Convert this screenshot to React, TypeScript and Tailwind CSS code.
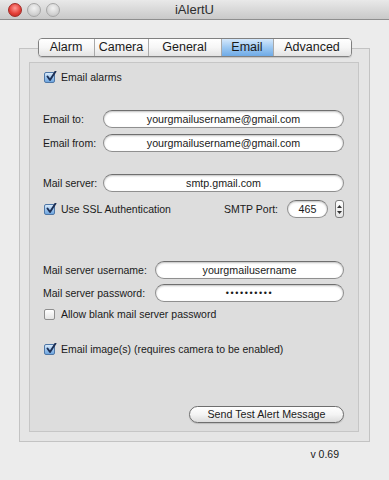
import React from "react";

const font = { fontFamily: '"Liberation Sans", Arial, sans-serif' };

function Check({ checked }: { checked: boolean }) {
  return (
    <div
      className={
        "relative w-[11px] h-[11px] rounded-[2px] border shrink-0 " +
        (checked
          ? "border-[#4f77a6] bg-gradient-to-b from-[#d9eafa] via-[#9fc6ee] to-[#6ea5de]"
          : "border-[#8e8e8e] bg-gradient-to-b from-[#ffffff] to-[#e4e4e4]")
      }
    >
      {checked && (
        <svg className="absolute left-[1px] top-[-2px]" width="11" height="11" viewBox="0 0 11 11">
          <path d="M1.5 5.5 L4 9 L9.5 0.5" fill="none" stroke="#1c2f55" strokeWidth="1.9" strokeLinecap="round" strokeLinejoin="round" />
        </svg>
      )}
    </div>
  );
}

function CheckRow({ checked, label, className = "" }: { checked: boolean; label: string; className?: string }) {
  return (
    <div className={"flex items-center h-[14px] pl-[1px] gap-[6px] " + className}>
      <Check checked={checked} />
      <span className="text-[10.5px] text-[#1a1a1a] leading-none">{label}</span>
    </div>
  );
}

function Field({ value, className = "", bullets = false }: { value: string; className?: string; bullets?: boolean }) {
  return (
    <div
      className={
        "h-[18px] rounded-full border border-[#8f8f8f] border-t-[#6f6f6f] bg-white shadow-[inset_0_1px_2px_rgba(0,0,0,0.25)] flex items-center justify-center " +
        className
      }
    >
      <span
        className={
          "leading-none text-[#1a1a1a] " + (bullets ? "text-[9px] tracking-[1.6px]" : "text-[10.7px]")
        }
      >
        {value}
      </span>
    </div>
  );
}

function LabeledField({ label, value, labelW, className = "", bullets = false }: { label: string; value: string; labelW: string; className?: string; bullets?: boolean }) {
  return (
    <div className={"flex items-center h-[18px] " + className}>
      <span className={"text-[10.5px] text-[#1a1a1a] leading-none shrink-0 " + labelW}>{label}</span>
      <Field value={value} className="flex-1" bullets={bullets} />
    </div>
  );
}

export default function App() {
  const tabs = [
    { t: "Alarm", w: "w-[55px]" },
    { t: "Camera", w: "w-[54px]" },
    { t: "General", w: "w-[73px]" },
    { t: "Email", w: "w-[52px]", sel: true },
    { t: "Advanced", w: "w-[78px]" },
  ];
  return (
    <div className="w-[389px] h-[480px] bg-[#ececec] flex flex-col overflow-hidden" style={font}>
      {/* title bar */}
      <div className="relative h-[20px] shrink-0 bg-gradient-to-b from-[#e9e9e9] to-[#c9c9c9] border-b border-[#8e8e8e] flex items-center">
        <div className="flex items-center gap-[5px] pl-[8px]">
          <div className="w-[14px] h-[14px] rounded-full border border-[#a12a25] bg-[radial-gradient(circle_at_50%_35%,#ff9a94_0%,#e5413a_55%,#b8231d_100%)]" />
          <div className="w-[14px] h-[14px] rounded-full border border-[#a6a6a6] bg-[radial-gradient(circle_at_50%_35%,#f2f2f2_0%,#d3d3d3_60%,#bdbdbd_100%)]" />
          <div className="w-[14px] h-[14px] rounded-full border border-[#a6a6a6] bg-[radial-gradient(circle_at_50%_35%,#f2f2f2_0%,#d3d3d3_60%,#bdbdbd_100%)]" />
        </div>
        <div className="absolute inset-0 flex items-center justify-center pointer-events-none">
          <span className="text-[13px] text-[#2e2e2e] leading-none">iAlertU</span>
        </div>
      </div>

      {/* tab view */}
      <div className="mt-[18px] flex flex-col">
        <div className="relative z-10 flex justify-center">
          <div className="flex h-[19px] rounded-[4px] border border-[#808080] overflow-hidden shadow-[0_1px_1px_rgba(0,0,0,0.15)]">
            {tabs.map((tb, i) => (
              <div
                key={tb.t}
                className={
                  "flex items-center justify-center text-[12.5px] leading-none text-[#1a1a1a] " +
                  tb.w +
                  (i > 0 ? " border-l border-[#a9a9a9]" : "") +
                  (tb.sel
                    ? " bg-gradient-to-b from-[#d5e8fb] via-[#9cc8f2] to-[#6eaae6]"
                    : " bg-gradient-to-b from-[#ffffff] via-[#f6f6f6] to-[#e3e3e3]")
                }
              >
                {tb.t}
              </div>
            ))}
          </div>
        </div>
        <div className="-mt-[9px] mx-[19px] h-[394px] border border-[#c3c3c3] bg-[#e5e5e5] pl-[9px] pr-[10px] pt-[13px] pb-[9px] flex flex-col">
          <div className="flex-1 border border-[#c6c6c6] bg-[#dddddd] pl-[13px] pr-[14px] flex flex-col">
            <CheckRow checked label="Email alarms" className="mt-[7px]" />
            <LabeledField label="Email to:" value="yourgmailusername@gmail.com" labelW="w-[60px]" className="mt-[26px]" />
            <LabeledField label="Email from:" value="yourgmailusername@gmail.com" labelW="w-[60px]" className="mt-[6px]" />
            <LabeledField label="Mail server:" value="smtp.gmail.com" labelW="w-[60px]" className="mt-[22px]" />
            <div className="mt-[7px] h-[20px] flex items-center">
              <CheckRow checked label="Use SSL Authentication" />
              <div className="ml-auto flex items-center">
                <span className="text-[10.5px] text-[#1a1a1a] leading-none mr-[9px]">SMTP Port:</span>
                <Field value="465" className="w-[41px] h-[17px]" />
                <div className="ml-[7px] w-[9px] h-[18px] rounded-[3px] border border-[#7d7d7d] bg-gradient-to-b from-[#ffffff] to-[#e6e6e6] flex flex-col items-center justify-center gap-[3px]">
                  <svg width="5" height="3" viewBox="0 0 5 3"><path d="M0 3 L2.5 0 L5 3 Z" fill="#333" /></svg>
                  <svg width="5" height="3" viewBox="0 0 5 3"><path d="M0 0 L2.5 3 L5 0 Z" fill="#333" /></svg>
                </div>
              </div>
            </div>
            <LabeledField label="Mail server username:" value="yourgmailusername" labelW="w-[112px]" className="mt-[42px]" />
            <LabeledField label="Mail server password:" value="••••••••••" labelW="w-[112px]" className="mt-[5px]" bullets />
            <CheckRow checked={false} label="Allow blank mail server password" className="mt-[5px]" />
            <CheckRow checked label="Email image(s) (requires camera to be enabled)" className="mt-[21px]" />
            <div className="mt-[50px] flex justify-end">
              <div className="w-[155px] h-[17px] rounded-full border border-[#6e6e6e] bg-gradient-to-b from-[#ffffff] via-[#f4f4f4] to-[#dcdcdc] shadow-[0_1px_1px_rgba(0,0,0,0.15)] flex items-center justify-center">
                <span className="text-[10.7px] text-[#1a1a1a] leading-none">Send Test Alert Message</span>
              </div>
            </div>
          </div>
        </div>
        <div className="mt-[7px] flex justify-end pr-[50px]">
          <span className="text-[10.5px] text-[#1a1a1a] leading-none">v 0.69</span>
        </div>
      </div>
    </div>
  );
}
